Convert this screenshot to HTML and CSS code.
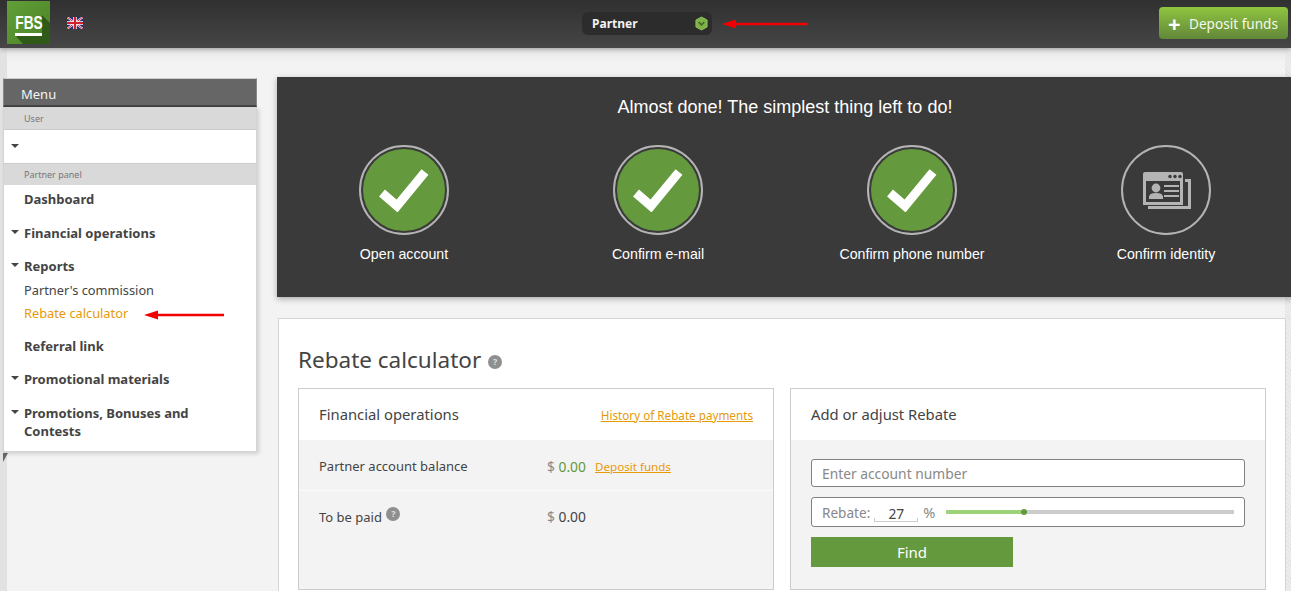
FILE: index.html
```html
<!DOCTYPE html>
<html lang="en">
<head>
    <meta charset="UTF-8">
    <meta name="viewport" content="width=device-width, initial-scale=1.0">
    <title>Rebate calculator</title>
    <link rel="stylesheet" href="styles.css">
</head>
<body>
    <header class="topbar">
        <div class="logo">
            <svg class="logo-shade" viewBox="0 0 43 43"><path d="M35 14L43 22V43H16L8 34H35Z" fill="#2f5a18"/></svg>
            <div class="logo-mark"><span class="logo-text">FBS</span></div>
        </div>
        <svg class="flag" viewBox="0 0 16 12">
            <rect width="16" height="12" fill="#1f2f78"/>
            <path d="M0 0L16 12M16 0L0 12" stroke="#fff" stroke-width="2"/>
            <path d="M0 0L16 12M16 0L0 12" stroke="#d3202f" stroke-width="1"/>
            <path d="M8 0V12M0 6H16" stroke="#fff" stroke-width="3.6"/>
            <path d="M8 0V12M0 6H16" stroke="#d3202f" stroke-width="2.2"/>
        </svg>
        <div class="account-pill">
            <span>Partner</span>
            <svg class="hex" viewBox="0 0 14 16">
                <path d="M7 1L13 4.2V11.8L7 15L1 11.8V4.2Z" fill="#7fb24a" stroke="#8fc457"/>
                <path d="M4 6.5L7 9.5L10 6.5" fill="none" stroke="#3f6a22" stroke-width="1.6"/>
            </svg>
        </div>
        <svg class="red-arrow arrow-top" viewBox="0 0 86 10">
            <path d="M0 5L14 0.5V3.7H86V6.3H14V9.5Z" fill="#f00000"/>
        </svg>
        <a class="deposit-btn" href="#"><span class="plus">+</span>Deposit funds</a>
    </header>

    <div class="page">
        <aside class="sidebar">
            <div class="menu-title">Menu</div>
            <div class="menu-body">
                <div class="menu-section">User</div>
                <div class="menu-user"><i class="caret"></i></div>
                <div class="menu-section">Partner panel</div>
                <ul class="menu-list">
                    <li class="item bold">Dashboard</li>
                    <li class="item bold"><i class="caret"></i>Financial operations</li>
                    <li class="item bold open"><i class="caret"></i>Reports</li>
                    <li class="item sub">Partner's commission</li>
                    <li class="item sub active">Rebate calculator</li>
                    <li class="item bold gap">Referral link</li>
                    <li class="item bold"><i class="caret"></i>Promotional materials</li>
                    <li class="item bold double"><i class="caret"></i>Promotions, Bonuses and Contests</li>
                </ul>
                <svg class="red-arrow arrow-side" viewBox="0 0 80 10">
                    <path d="M0 5L14 0.5V3.7H80V6.3H14V9.5Z" fill="#f00000"/>
                </svg>
            </div>
            <i class="fold"></i>
        </aside>

        <main class="content">
            <section class="banner">
                <h2>Almost done! The simplest thing left to do!</h2>
                <div class="steps">
                    <div class="step">
                        <div class="ring"><div class="disc">
                            <svg class="check" viewBox="0 0 50 44"><path d="M3 25L18 38L46 4" fill="none" stroke="#fff" stroke-width="9"/></svg>
                        </div></div>
                        <p>Open account</p>
                    </div>
                    <div class="step">
                        <div class="ring"><div class="disc">
                            <svg class="check" viewBox="0 0 50 44"><path d="M3 25L18 38L46 4" fill="none" stroke="#fff" stroke-width="9"/></svg>
                        </div></div>
                        <p>Confirm e-mail</p>
                    </div>
                    <div class="step">
                        <div class="ring"><div class="disc">
                            <svg class="check" viewBox="0 0 50 44"><path d="M3 25L18 38L46 4" fill="none" stroke="#fff" stroke-width="9"/></svg>
                        </div></div>
                        <p>Confirm phone number</p>
                    </div>
                    <div class="step">
                        <div class="ring ring-empty">
                            <svg class="id-icon" viewBox="0 0 48 37">
                                <path d="M42 7H48V37H5V34H45V10H42Z" fill="#b4b4b4"/>
                                <path d="M0 2Q0 0 2 0H38Q40 0 40 2V33H0Z" fill="#b4b4b4"/>
                                <rect x="3" y="9" width="34" height="21" fill="#3a3a3a"/>
                                <g fill="#3a3a3a">
                                    <circle cx="27" cy="4.5" r="1.7"/><circle cx="32" cy="4.5" r="1.7"/><circle cx="37" cy="4.5" r="1.7"/>
                                </g>
                                <g fill="#b4b4b4">
                                    <circle cx="13" cy="16" r="4.4"/>
                                    <path d="M6 27V25Q6 21 13 21Q20 21 20 25V27Z"/>
                                    <rect x="21" y="13" width="15" height="2"/><rect x="21" y="18" width="15" height="2"/><rect x="21" y="23" width="15" height="2"/>
                                </g>
                            </svg>
                        </div>
                        <p>Confirm identity</p>
                    </div>
                </div>
            </section>

            <section class="card">
                <h1>Rebate calculator <span class="help help-lg">?</span></h1>
                <div class="panels">
                    <div class="panel">
                        <div class="panel-head">
                            <h3>Financial operations</h3>
                            <a class="link history-link" href="#">History of Rebate payments</a>
                        </div>
                        <div class="panel-body">
                            <div class="row">
                                <span class="row-label">Partner account balance</span>
                                <span class="amount"><b class="cur">$</b> <span class="green">0.00</span></span>
                                <a class="link" href="#">Deposit funds</a>
                            </div>
                            <div class="row">
                                <span class="row-label">To be paid <span class="help">?</span></span>
                                <span class="amount"><b class="cur">$</b> 0.00</span>
                            </div>
                        </div>
                    </div>
                    <div class="panel">
                        <div class="panel-head">
                            <h3>Add or adjust Rebate</h3>
                        </div>
                        <div class="panel-body form-body">
                            <div class="field">Enter account number</div>
                            <div class="field rebate-field">
                                <span class="rebate-label">Rebate:</span>
                                <span class="rebate-value">27</span>
                                <span class="percent">%</span>
                                <div class="slider"><div class="slider-fill"></div><i class="slider-dot"></i></div>
                            </div>
                            <button class="find-btn">Find</button>
                        </div>
                    </div>
                </div>
            </section>
        </main>
    </div>
</body>
</html>
```

FILE: styles.css
```css
html, body {
    margin: 0;
    height: 591px;
    overflow: hidden;
}
body {
    background-color: #f3f3f3;
    font-family: "Noto Sans", sans-serif;
    font-size: 13px;
    color: #444;
}
h1, h2, h3, p, ul {
    margin: 0;
    padding: 0;
    font-weight: normal;
}

/* top bar */
.topbar {
    position: relative;
    z-index: 2;
    display: flex;
    align-items: center;
    height: 48px;
    background: linear-gradient(#303030, #464646);
    box-shadow: 0 1px 5px rgba(0, 0, 0, 0.35);
}
.logo {
    position: relative;
    width: 43px;
    height: 43px;
    margin: 0 0 3px 7px;
    display: flex;
    flex-direction: column;
    align-items: center;
    background: linear-gradient(135deg, #629f37, #4a8228);
}
.logo-shade {
    position: absolute;
    left: 0;
    top: 0;
    width: 43px;
    height: 43px;
}
.logo-mark {
    position: relative;
    width: 27px;
    margin-top: 12px;
    border-bottom: 3px solid #fff;
    display: flex;
    justify-content: center;
}
.logo-text {
    font-family: "Liberation Sans", sans-serif;
    font-size: 19px;
    font-weight: bold;
    line-height: 20px;
    color: #fff;
    transform: scaleX(0.72);
}
.flag {
    width: 16px;
    height: 12px;
    margin-left: 17px;
    margin-bottom: 2px;
}
.account-pill {
    position: absolute;
    left: 582px;
    top: 12px;
    box-sizing: border-box;
    width: 130px;
    height: 23px;
    padding: 0 4px 0 10px;
    display: flex;
    align-items: center;
    justify-content: space-between;
    background-color: #2c2c2c;
    border-radius: 6px;
    font-size: 12px;
    font-weight: bold;
    color: #f2f2f2;
}
.hex {
    width: 13px;
    height: 15px;
}
.red-arrow {
    position: absolute;
}
.arrow-top {
    left: 722px;
    top: 19px;
    width: 86px;
    height: 10px;
}
.deposit-btn {
    margin-left: auto;
    margin-right: 3px;
    margin-bottom: 2px;
    box-sizing: border-box;
    width: 129px;
    height: 32px;
    display: flex;
    align-items: center;
    padding-left: 9px;
    background: linear-gradient(#8fc43f, #62883a);
    border-radius: 4px;
    color: #f4f8ee;
    font-size: 13.6px;
    text-decoration: none;
}
.plus {
    width: 21px;
    font-size: 22px;
    font-weight: bold;
    line-height: 22px;
    color: #fff;
}

/* page */
.page {
    display: flex;
    align-items: flex-start;
    box-sizing: border-box;
    height: 543px;
    background-color: #f3f3f3;
    background-image:
        linear-gradient(#e6e6e6, rgba(243, 243, 243, 0) 14px),
        repeating-linear-gradient(45deg, #e4e4e4 0 1px, #ececec 1px 3px);
    background-size: 100% 100%, 6px 100%;
    background-position: 0 0, right top;
    background-repeat: no-repeat;
    border-left: 7px solid #e2e2e2;
}

/* sidebar */
.sidebar {
    position: relative;
    flex: none;
    width: 254px;
    margin: 30px 0 0 -4px;
}
.menu-title {
    box-sizing: content-box;
    width: 235px;
    height: 26px;
    padding-left: 17px;
    background-color: #666;
    border: 1px solid #888;
    border-top-color: #ccc;
    border-bottom: 2px solid #444;
    font-size: 13px;
    line-height: 30px;
    color: #f4f4f4;
}
.menu-body {
    position: relative;
    background-color: #fff;
    border: 1px solid #d4d4d4;
    box-shadow: 2px 2px 4px rgba(0, 0, 0, 0.15);
}
.menu-section {
    height: 21px;
    padding-left: 20px;
    background-color: #d9d9d9;
    font-size: 9px;
    line-height: 21px;
    color: #777;
}
.menu-user {
    box-sizing: border-box;
    height: 35px;
    padding-left: 7px;
    border-top: 1px solid #ccc;
    border-bottom: 1px solid #ccc;
    line-height: 27px;
}
.menu-list {
    list-style: none;
    padding-bottom: 11px;
}
.item {
    position: relative;
    padding-left: 20px;
    padding-right: 40px;
    line-height: 18px;
}
.item.bold {
    font-weight: bold;
    padding-top: 5px;
    padding-bottom: 10.5px;
}
.item.open {
    padding-bottom: 3.5px;
}
.item.sub {
    padding-top: 2.5px;
    padding-bottom: 2.5px;
    font-size: 12.8px;
}
.item.active {
    color: #e69a08;
}
.item.gap {
    margin-top: 7px;
}
.item .caret {
    position: absolute;
    left: 7px;
    top: 11px;
}
.item.double {
    padding-bottom: 0;
}
.caret {
    display: inline-block;
    width: 0;
    height: 0;
    border-left: 4.5px solid transparent;
    border-right: 4.5px solid transparent;
    border-top: 4px solid #444;
}
.arrow-side {
    left: 140px;
    top: 202px;
    width: 80px;
    height: 10px;
}
.fold {
    position: absolute;
    left: 0;
    bottom: -10px;
    width: 0;
    height: 0;
    border-left: 5px solid #666;
    border-bottom: 9px solid transparent;
}

/* main */
.content {
    flex: none;
    width: 1016px;
    margin: 29px 0 0 20px;
}
.banner {
    height: 220px;
    background-color: #3a3a3a;
    box-shadow: 0 2px 6px rgba(0, 0, 0, 0.3);
    font-family: "Liberation Sans", sans-serif;
    color: #fff;
}
.banner h2 {
    padding-top: 20px;
    font-size: 18px;
    line-height: 21px;
    text-align: center;
}
.steps {
    display: grid;
    grid-template-columns: repeat(4, 254px);
    margin-top: 27px;
}
.step {
    display: flex;
    flex-direction: column;
    align-items: center;
}
.step p {
    margin-top: 11px;
    font-size: 14.2px;
    line-height: 16px;
}
.ring {
    box-sizing: border-box;
    width: 90px;
    height: 90px;
    display: flex;
    align-items: center;
    justify-content: center;
    border: 2px solid #b4b4b4;
    border-radius: 50%;
}
.disc {
    width: 82px;
    height: 82px;
    display: flex;
    align-items: center;
    justify-content: center;
    background-color: #64993d;
    border-radius: 50%;
}
.check {
    width: 50px;
    height: 44px;
}
.id-icon {
    width: 48px;
    height: 37px;
    margin-left: 2px;
    margin-top: 1px;
}
.card {
    box-sizing: border-box;
    width: 1008px;
    height: 290px;
    margin: 21px 0 0 1px;
    padding: 26px 19px 0;
    background-color: #fff;
    border: 1px solid #d4d4d4;
}
.card h1 {
    font-size: 22.5px;
    line-height: 30px;
    color: #444;
}
.help {
    display: inline-block;
    width: 14px;
    height: 14px;
    background-color: #8f8f8f;
    border-radius: 50%;
    font-size: 9px;
    font-weight: bold;
    line-height: 14px;
    text-align: center;
    color: #ddd;
}
.help-lg {
    vertical-align: 3px;
    margin-left: 1px;
}
.panels {
    display: grid;
    grid-template-columns: 476px 476px;
    column-gap: 16px;
    margin-top: 13px;
}
.panel {
    box-sizing: border-box;
    height: 202px;
    display: flex;
    flex-direction: column;
    border: 1px solid #ccc;
}
.panel-head {
    flex: none;
    box-sizing: border-box;
    height: 51px;
    padding: 0 20px 2px;
    display: flex;
    align-items: center;
    justify-content: space-between;
}
.panel-head h3 {
    font-size: 14.8px;
    color: #444;
}
.link {
    color: #e69a08;
    font-size: 11.6px;
}
.history-link {
    margin-top: 2px;
    font-size: 11.7px;
}
.panel-body {
    flex: 1;
    background-color: #f3f3f3;
}
.row {
    box-sizing: border-box;
    display: flex;
    align-items: center;
    height: 51px;
    padding: 2px 0 0 20px;
    border-bottom: 1px solid #fbfbfb;
}
.row:last-child {
    padding-top: 0;
    border-bottom: none;
}
.row-label {
    width: 228px;
}
.row-label .help {
    vertical-align: 5px;
    margin-left: 1px;
}
.amount {
    width: 48px;
    font-size: 13.8px;
}
.cur {
    font-weight: normal;
    color: #888;
}
.green {
    color: #64993d;
}
.form-body {
    padding: 19px 20px 0;
}
.field {
    box-sizing: border-box;
    width: 434px;
    height: 28px;
    padding-left: 10px;
    background-color: #fff;
    border: 1px solid #808080;
    border-radius: 3px;
    font-size: 13.8px;
    line-height: 28px;
    color: #888;
}
.rebate-field {
    height: 30px;
    margin-top: 10px;
    display: flex;
    align-items: center;
    line-height: 30px;
}
.rebate-label {
    margin-top: 1px;
    font-size: 13.6px;
}
.rebate-value {
    box-sizing: border-box;
    width: 44px;
    height: 16px;
    margin: 4px 5px 0 4px;
    border-bottom: 1px solid #ccc;
    background-image: linear-gradient(#ccc, #ccc), linear-gradient(#ccc, #ccc);
    background-size: 1px 3px;
    background-position: left bottom, right bottom;
    background-repeat: no-repeat;
    line-height: 15px;
    text-align: center;
    color: #444;
}
.percent {
    font-size: 14.5px;
}
.slider {
    position: relative;
    width: 288px;
    height: 4px;
    margin-left: 11px;
    background-color: #ccc;
}
.slider-fill {
    width: 78px;
    height: 4px;
    background-color: #a0d27a;
}
.slider-dot {
    position: absolute;
    left: 75px;
    top: -1px;
    width: 6px;
    height: 6px;
    background-color: #64993d;
    border-radius: 50%;
}
.find-btn {
    display: block;
    width: 202px;
    height: 30px;
    margin-top: 10px;
    padding: 0;
    background-color: #64993d;
    border: none;
    font-family: inherit;
    font-size: 15px;
    color: #fff;
}
```
